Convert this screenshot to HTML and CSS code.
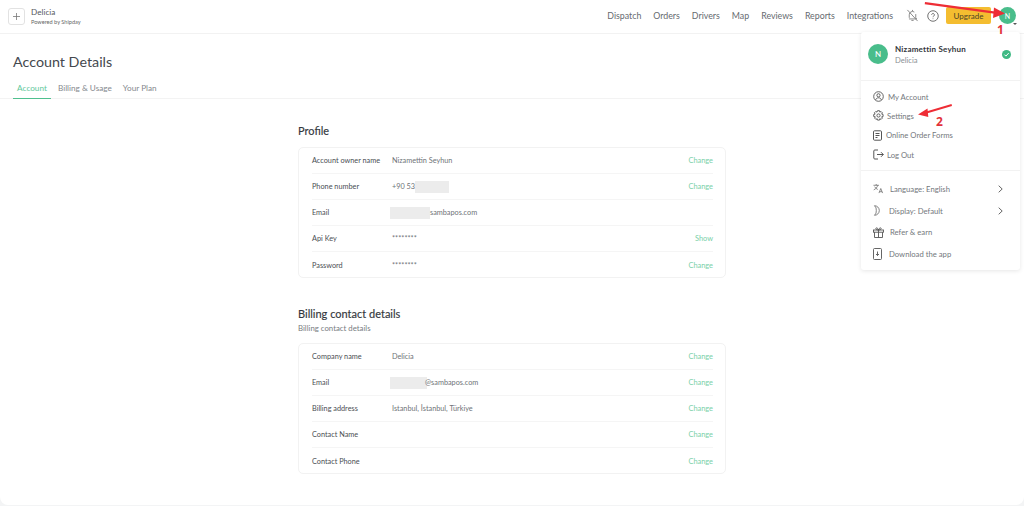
FILE: index.html
```html
<!DOCTYPE html>
<html lang="en">
<head>
<meta charset="utf-8">
<title>Account Details</title>
<link rel="stylesheet" href="styles.css">
</head>
<body>
<div class="app">
  <header class="topbar">
    <div class="brand">
      <button class="add-btn"><svg width="7" height="7" viewBox="0 0 7 7"><path d="M3.500 0v7M0 3.500h7" stroke="#777" stroke-width=".8" fill="none"/></svg></button>
      <div class="brand-text">
        <div class="brand-name">Delicia</div>
        <div class="brand-sub">Powered by Shipday</div>
      </div>
    </div>
    <nav class="nav">
      <a>Dispatch</a><a>Orders</a><a>Drivers</a><a>Map</a><a>Reviews</a><a>Reports</a><a>Integrations</a>
    </nav>
    <div class="top-icons">
      <svg class="bell" width="13" height="13" viewBox="0 0 14 14" fill="none" stroke="#777" stroke-width=".9"><path d="M3.500 9.500V6.200a3.500 3.500 0 0 1 5.500-2.900M10.500 5.500v4l1 1.200H3.200M5.800 12.300h2.400M7 1v1.200M1.500 1l11 12"/></svg>
      <svg class="help" width="12" height="12" viewBox="0 0 13 13" fill="none" stroke="#666" stroke-width="1"><circle cx="6.500" cy="6.500" r="5.700"/><path d="M5 5.200a1.500 1.500 0 1 1 2.300 1.300c-.6.400-.8.700-.8 1.300M6.500 9.200v.7"/></svg>
      <button class="upgrade">Upgrade</button>
      <div class="avatar small">N<span class="caret"></span></div>
    </div>
  </header>

  <main class="page">
    <div class="page-head">
      <h1>Account Details</h1>
      <div class="tabs">
        <a class="tab active">Account</a><a class="tab">Billing &amp; Usage</a><a class="tab">Your Plan</a>
      </div>
    </div>
    <div class="content">
      <section class="section">
        <h2>Profile</h2>
        <div class="card">
          <div class="row"><span class="label">Account owner name</span><span class="value">Nizamettin Seyhun</span><a class="action">Change</a></div>
          <div class="row"><span class="label">Phone number</span><span class="value">+90 53<i class="blur phone"></i></span><a class="action">Change</a></div>
          <div class="row"><span class="label">Email</span><span class="value"><i class="blur mail-a"></i>sambapos.com</span></div>
          <div class="row"><span class="label">Api Key</span><span class="value">********</span><a class="action">Show</a></div>
          <div class="row"><span class="label">Password</span><span class="value">********</span><a class="action">Change</a></div>
        </div>
      </section>
      <section class="section billing">
        <h2>Billing contact details</h2>
        <p class="sub">Billing contact details</p>
        <div class="card">
          <div class="row"><span class="label">Company name</span><span class="value">Delicia</span><a class="action">Change</a></div>
          <div class="row"><span class="label">Email</span><span class="value"><i class="blur mail-b"></i>@sambapos.com</span><a class="action">Change</a></div>
          <div class="row"><span class="label">Billing address</span><span class="value">Istanbul, İstanbul, Türkiye</span><a class="action">Change</a></div>
          <div class="row"><span class="label">Contact Name</span><span class="value"></span><a class="action">Change</a></div>
          <div class="row"><span class="label">Contact Phone</span><span class="value"></span><a class="action">Change</a></div>
        </div>
      </section>
    </div>
  </main>

  <aside class="menu">
    <div class="menu-user">
      <div class="avatar">N</div>
      <div class="user-text">
        <div class="user-name">Nizamettin Seyhun</div>
        <div class="user-org">Delicia</div>
      </div>
      <svg class="check" width="9" height="9" viewBox="0 0 9 9"><circle cx="4.500" cy="4.500" r="4.500" fill="#3fb984"/><path d="M2.400 4.600l1.500 1.500 2.800-3" stroke="#fff" stroke-width="1" fill="none"/></svg>
    </div>
    <div class="menu-group first">
      <div class="item g4"><svg width="11" height="11" viewBox="0 0 11 11" fill="none" stroke="#555" stroke-width=".9"><circle cx="5.500" cy="5.500" r="4.800"/><circle cx="5.500" cy="4.300" r="1.600"/><path d="M2.700 8.800c.5-1.500 1.500-2 2.800-2s2.300.5 2.800 2"/></svg><span>My Account</span></div>
      <div class="item"><svg width="11" height="11" viewBox="0 0 11 11" fill="none" stroke="#555" stroke-width=".9"><circle cx="5.500" cy="5.500" r="1.600"/><path d="M4.500.7h2l.3 1.400 1.300-.6 1.300 1.300-.7 1.300 1.400.4v2l-1.400.3.700 1.300-1.300 1.300-1.300-.7-.3 1.400h-2l-.3-1.400-1.300.7-1.300-1.300.7-1.300L.7 6.500v-2l1.400-.4-.7-1.300 1.300-1.300 1.300.6z"/></svg><span>Settings</span></div>
      <div class="item g4"><svg width="9" height="11" viewBox="0 0 9 11" fill="none" stroke="#555" stroke-width="1"><rect x=".5" y=".8" width="8" height="9.400" rx="1"/><path d="M2.500 3.500h4M2.500 5.500h4M2.500 7.500h2"/></svg><span>Online Order Forms</span></div>
      <div class="item"><svg width="11" height="11" viewBox="0 0 11 11" fill="none" stroke="#555" stroke-width="1"><path d="M5 1H1.800a1 1 0 0 0-1 1v7a1 1 0 0 0 1 1H5M4 5.500h6.300M8 3.200l2.300 2.300L8 7.800"/></svg><span>Log Out</span></div>
    </div>
    <div class="menu-group second">
      <div class="item wide"><svg width="11" height="11" viewBox="0 0 12 11" fill="none" stroke="#666" stroke-width=".8"><path d="M.5 2h6M3.500.6V2M5.200 2C4.800 4 3 6 .8 7M1.800 3.500C2.600 5 3.800 6 5.200 6.600M6.500 10.500l2-5 2 5M7.200 9h2.600"/></svg><span>Language: English</span><svg class="chev" width="5" height="8" viewBox="0 0 5 8" fill="none" stroke="#666"><path d="M.7.7L4.200 4 .7 7.300"/></svg></div>
      <div class="item wide"><svg width="10" height="11" viewBox="0 0 10 11" fill="none" stroke="#666" stroke-width=".8"><path d="M1.500.7a4.800 4.800 0 0 1 0 9.600 5.500 5.500 0 0 0 1.800-4.800A5.500 5.500 0 0 0 1.500.7z"/></svg><span>Display: Default</span><svg class="chev" width="5" height="8" viewBox="0 0 5 8" fill="none" stroke="#666"><path d="M.7.7L4.200 4 .7 7.300"/></svg></div>
      <div class="item wide"><svg width="11" height="11" viewBox="0 0 11 11" fill="none" stroke="#555" stroke-width=".9"><rect x=".5" y="3" width="10" height="2.200"/><path d="M1.500 5.200v5.300h8V5.200M5.500 3v7.500M5.500 3C4 3 2.800 2.500 2.800 1.500S4.800.5 5.500 3zM5.500 3c1.500 0 2.700-.5 2.700-1.500S6.200.5 5.500 3z"/></svg><span>Refer &amp; earn</span></div>
      <div class="item wide g7"><svg width="9" height="12" viewBox="0 0 9 12" fill="none" stroke="#555" stroke-width=".9"><rect x=".5" y=".5" width="8" height="11" rx="1"/><path d="M4.500 3.500v4M3 6l1.500 1.500L6 6"/></svg><span>Download the app</span></div>
    </div>
  </aside>

  <svg class="annotations" width="1024" height="506" viewBox="0 0 1024 506">
    <g fill="#ee2d35">
      <path d="M925 2l70 9.500-.3 2.200-70-9.500z"/>
      <path d="M1005 13.500l-11-6 -1 10.500z"/>
      <path d="M951.500 104l-27 8 .5 2 27-8z"/>
      <path d="M918 114.500l9.500-6 .8 8.500z"/>
    </g>
    <text class="anno" x="997" y="34">1</text>
    <text class="anno" x="936" y="126">2</text>
  </svg>
</div>
</body>
</html>
```
FILE: styles.css
```css
* { box-sizing: border-box; }
html, body { margin: 0; height: 100%; }
body {
  background: #f3f4f5;
  font-family: Lato, "Open Sans", sans-serif;
  color: #4b4f55;
  overflow: hidden;
}
.app { position: relative; width: 1024px; height: 506px; display: flex; flex-direction: column; }

.topbar {
  height: 34px;
  flex: none;
  background: #fff;
  border-bottom: 1px solid #f2f2f2;
  display: flex;
  align-items: center;
  padding: 0 8px 2px;
}
.brand { display: flex; align-items: center; gap: 6px; }
.add-btn {
  width: 17px; height: 17px; padding: 0;
  margin-top: 2px;
  background: #fff;
  border: 1px solid #e2e2e2;
  border-radius: 3px;
  display: flex; align-items: center; justify-content: center;
}
.brand-text { margin-top: -1px; }
.brand-name { font-size: 8.200px; line-height: 12px; color: #55585d; }
.brand-sub { font-size: 5.600px; line-height: 7px; color: #666; }
.nav { margin-left: auto; display: flex; gap: 12px; font-size: 8.800px; color: #666a6f; }
.top-icons { display: flex; align-items: center; margin-left: 13px; }
.bell { margin-right: 8px; }
.help { margin-right: 7px; }
.upgrade {
  width: 45px; height: 17px; padding: 0;
  border: 0; border-radius: 2px;
  background: #f4bd30;
  color: #4d4326;
  font: 8px Lato, sans-serif;
}
.avatar {
  width: 20px; height: 20px; border-radius: 50%;
  background: #49bd8b; color: #fff;
  font-size: 8px; font-weight: 500;
  display: flex; align-items: center; justify-content: center;
  flex: none;
}
.avatar.small { width: 17px; height: 17px; margin-left: 8px; position: relative; font-size: 7px; }
.caret {
  position: absolute; right: -1px; bottom: -1px;
  border-left: 2px solid transparent; border-right: 2px solid transparent;
  border-top: 2.500px solid #555;
}

.page {
  flex: 1;
  background: #fff;
  border-radius: 0 0 8px 8px;
  margin-bottom: 1px;
}
.page-head { height: 65px; padding: 18px 13px 0; border-bottom: 1px solid #f3f3f3; }
h1 { margin: 0; font-size: 14.300px; line-height: 19px; font-weight: 400; color: #44484e; }
.tabs { display: flex; height: 28px; font-size: 8.200px; color: #85898e; }
.tab { line-height: 26px; padding-top: 4px; }
.tab.active { color: #63c99c; width: 38px; text-align: center; border-bottom: 1px solid #4fc08f; margin-right: 7px; }
.tab:nth-child(2) { margin-right: 11px; }

.content { width: 428px; margin-left: 298px; padding-top: 25px; }
h2 { margin: 0; font-size: 11px; line-height: 14px; font-weight: 400; color: #33373c; -webkit-text-stroke: .15px #33373c; }
.section > h2 { margin-bottom: 9px; }
.billing { margin-top: 29px; }
.billing > h2 { margin-bottom: 0; }
.sub { margin: 2px 0 9px; font-size: 7.800px; line-height: 11px; color: #787c81; }
.card {
  height: 131px;
  border: 1px solid #f2f2f2;
  border-radius: 5px;
  padding: 0 12px 0 13px;
  background: #fff;
}
.row {
  height: 26px;
  display: flex; align-items: center;
  font-size: 7.300px;
  border-bottom: 1px solid #f5f5f5;
}
.row:last-child { border-bottom: 0; height: 27px; }
.label { width: 80px; color: #4a4e53; flex: none; }
.value { flex: 1; color: #6f7378; display: flex; align-items: center; }
.action { color: #79d0a8; font-size: 7.400px; }
.blur { display: block; height: 12px; background: #ececec; }
.blur.phone { width: 34px; }
.blur.mail-a { width: 40px; margin-left: -2px; }
.blur.mail-b { width: 37px; margin-left: -2px; margin-right: -2px; }

.menu {
  position: absolute; left: 861px; top: 32px;
  width: 159px; height: 238px;
  background: #fff;
  border-radius: 3px;
  box-shadow: 0 1px 4px rgba(0,0,0,.1);
  display: flex; flex-direction: column;
}
.menu-user { height: 49px; flex: none; display: flex; align-items: center; padding: 0 9px 5px 7px; border-bottom: 1px solid #f2f2f2; }
.user-text { margin: 1px 0 0 7px; flex: 1; }
.user-name { font-size: 8px; line-height: 11px; font-weight: 700; color: #33363b; letter-spacing: .2px; }
.user-org { font-size: 7.600px; line-height: 10px; color: #8b8f94; }
.check { margin-top: 1px; }
.menu-group { padding: 6px 13px 0 12px; }
.menu-group.first { height: 90px; border-bottom: 1px solid #f2f2f2; }
.menu-group.second { padding-top: 7px; }
.item { height: 19.300px; display: flex; align-items: center; gap: 3px; font-size: 7.700px; color: #74787d; }
.item svg { flex: none; }
.item.g4 { gap: 4px; }
.item.wide { height: 21.700px; gap: 6px; }
.item.g7 { gap: 7px; }
.item.wide span { flex: 1; }
.chev { margin-right: 4px; }

.annotations { position: absolute; inset: 0; pointer-events: none; }
.anno { fill: #e2333a; font: 700 12px "Open Sans", sans-serif; }
```
